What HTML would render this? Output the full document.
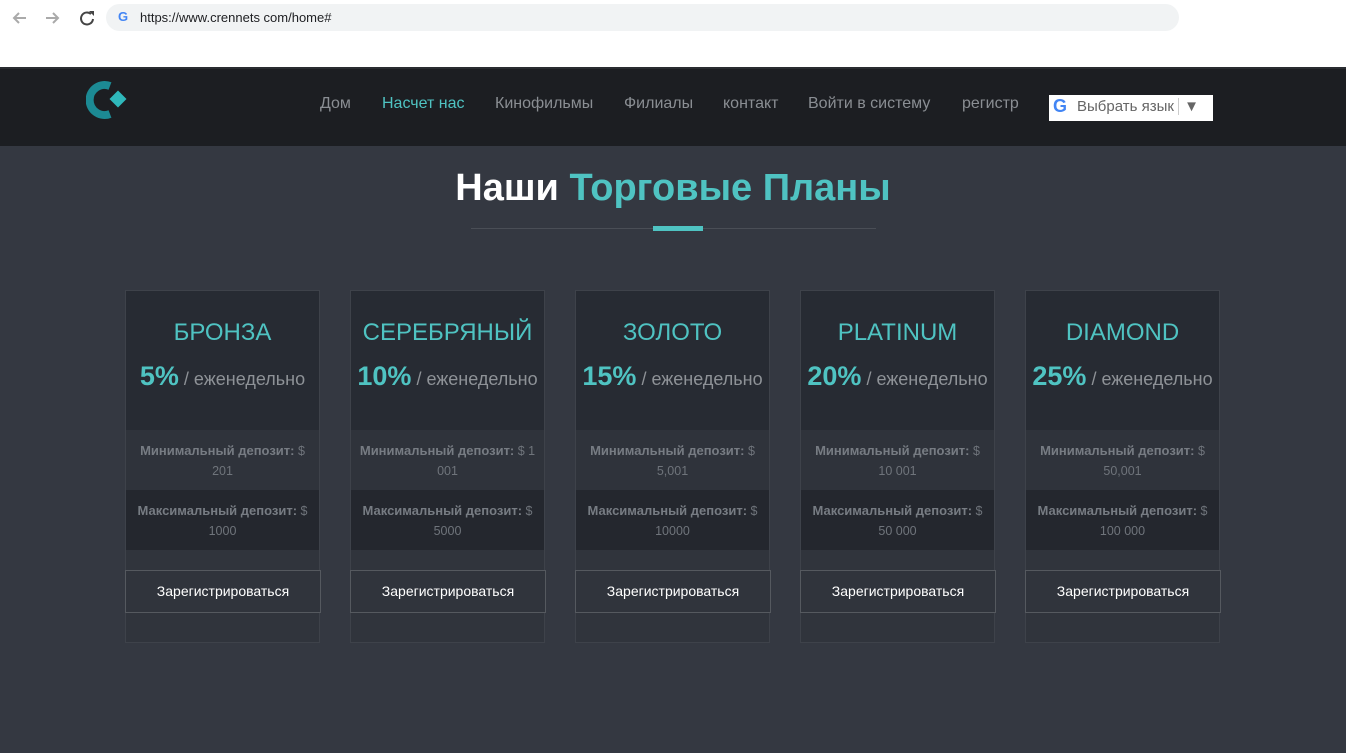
<!DOCTYPE html><html><head><meta charset="utf-8"><style>
*{margin:0;padding:0;box-sizing:border-box}
body{width:1346px;height:753px;overflow:hidden;background:#343841;font-family:"Liberation Sans",sans-serif}
.chrome{position:absolute;left:0;top:0;width:1346px;height:67px;background:#fff}
.url{position:absolute;left:106px;top:4px;width:1073px;height:27px;border-radius:14px;background:#f1f3f4;font-size:13px;color:#202124;padding:6px 0 0 34px}
.hdr{position:absolute;left:0;top:67px;width:1346px;height:79px;background:#1c1e22;border-top:2px solid #2a2d31}
.nav a{position:absolute;top:26px;font-size:16px;color:#8a8e93;text-decoration:none}
.lang{position:absolute;left:1049px;top:26px;width:164px;height:26px;background:#fff;font-size:15px;color:#666;padding:3px 0 0 28px}
h1{position:absolute;top:167px;left:0;width:1346px;text-align:center;font-size:38px;color:#fff;font-weight:bold}
h1 span{color:#4fc3c2}
.card{position:absolute;top:290px;width:195px;height:353px;border:1px solid #3e424a;background:#30343c}
.top{height:139px;background:#272b33;text-align:center}
.t{padding-top:28px;font-size:24px;color:#4fc3c2}
.p{margin-top:14px;font-size:18px;color:#8e9297;white-space:nowrap}
.p b{font-size:27px;color:#4fc3c2}
.row{height:60px;text-align:center;font-size:12.5px;color:#6f747b;padding-top:11px;line-height:20px}
.row b{font-size:13px;color:#777c83}
.min{background:#2f333b}.max{background:#24272e}
.btn{position:absolute;left:-1px;top:279px;width:196px;height:43px;border:1px solid #55595f;color:#fff;font-size:14px;text-align:center;line-height:41px;background:#30343c}
</style></head><body>
<div class="chrome">
<svg style="position:absolute;left:12px;top:9px" width="90" height="18"><path d="M14 9H2M7 4L2 9l5 5" stroke="#aaa" stroke-width="2" fill="none"/><path d="M34 9h12M41 4l5 5-5 5" stroke="#aaa" stroke-width="2" fill="none"/><path d="M79 5a6 6 0 1 0 2 5" stroke="#444" stroke-width="2" fill="none"/><path d="M77 2l5 0 0 5z" fill="#444"/></svg>
<div class="url"><span style="position:absolute;left:12px;top:5px;font-weight:bold;color:#4285f4">G</span>https://www.crennets com/home#</div>
</div>
<div class="hdr">
<svg style="position:absolute;left:86px;top:11px" width="44" height="42"><path d="M24 6A15 15 0 1 0 24 34" stroke="#1c8a94" stroke-width="8" fill="none"/><rect x="26" y="13" width="12" height="12" fill="#2fb8bb" transform="rotate(45 32 19)"/></svg>
<div class="nav"><a style="left:320px">Дом</a><a style="left:382px;color:#4fc3c2">Насчет нас</a><a style="left:495px">Кинофильмы</a><a style="left:624px">Филиалы</a><a style="left:723px">контакт</a><a style="left:808px">Войти в систему</a><a style="left:962px">регистр</a></div>
<div class="lang"><span style="position:absolute;left:4px;top:1px;font-weight:bold;font-size:18px;color:#4285f4">G</span>Выбрать язык <span style="border-left:1px solid #ccc;padding-left:5px;color:#666">▼</span></div>
</div>
<h1>Наши <span>Торговые Планы</span></h1>
<div style="position:absolute;left:471px;top:228px;width:405px;height:1px;background:#4a4e56"></div>
<div style="position:absolute;left:653px;top:226px;width:50px;height:5px;background:#4fc3c2"></div>

<div class="card" style="left:125px"><div class="top"><div class="t">БРОНЗА</div><div class="p"><b>5%</b> / еженедельно</div></div><div class="row min"><b>Минимальный депозит:</b> $<br>201</div><div class="row max"><b>Максимальный депозит:</b> $<br>1000</div><div class="btn">Зарегистрироваться</div></div>
<div class="card" style="left:350px"><div class="top"><div class="t">СЕРЕБРЯНЫЙ</div><div class="p"><b>10%</b> / еженедельно</div></div><div class="row min"><b>Минимальный депозит:</b> $ 1<br>001</div><div class="row max"><b>Максимальный депозит:</b> $<br>5000</div><div class="btn">Зарегистрироваться</div></div>
<div class="card" style="left:575px"><div class="top"><div class="t">ЗОЛОТО</div><div class="p"><b>15%</b> / еженедельно</div></div><div class="row min"><b>Минимальный депозит:</b> $<br>5,001</div><div class="row max"><b>Максимальный депозит:</b> $<br>10000</div><div class="btn">Зарегистрироваться</div></div>
<div class="card" style="left:800px"><div class="top"><div class="t">PLATINUM</div><div class="p"><b>20%</b> / еженедельно</div></div><div class="row min"><b>Минимальный депозит:</b> $<br>10 001</div><div class="row max"><b>Максимальный депозит:</b> $<br>50 000</div><div class="btn">Зарегистрироваться</div></div>
<div class="card" style="left:1025px"><div class="top"><div class="t">DIAMOND</div><div class="p"><b>25%</b> / еженедельно</div></div><div class="row min"><b>Минимальный депозит:</b> $<br>50,001</div><div class="row max"><b>Максимальный депозит:</b> $<br>100 000</div><div class="btn">Зарегистрироваться</div></div>
</body></html>
